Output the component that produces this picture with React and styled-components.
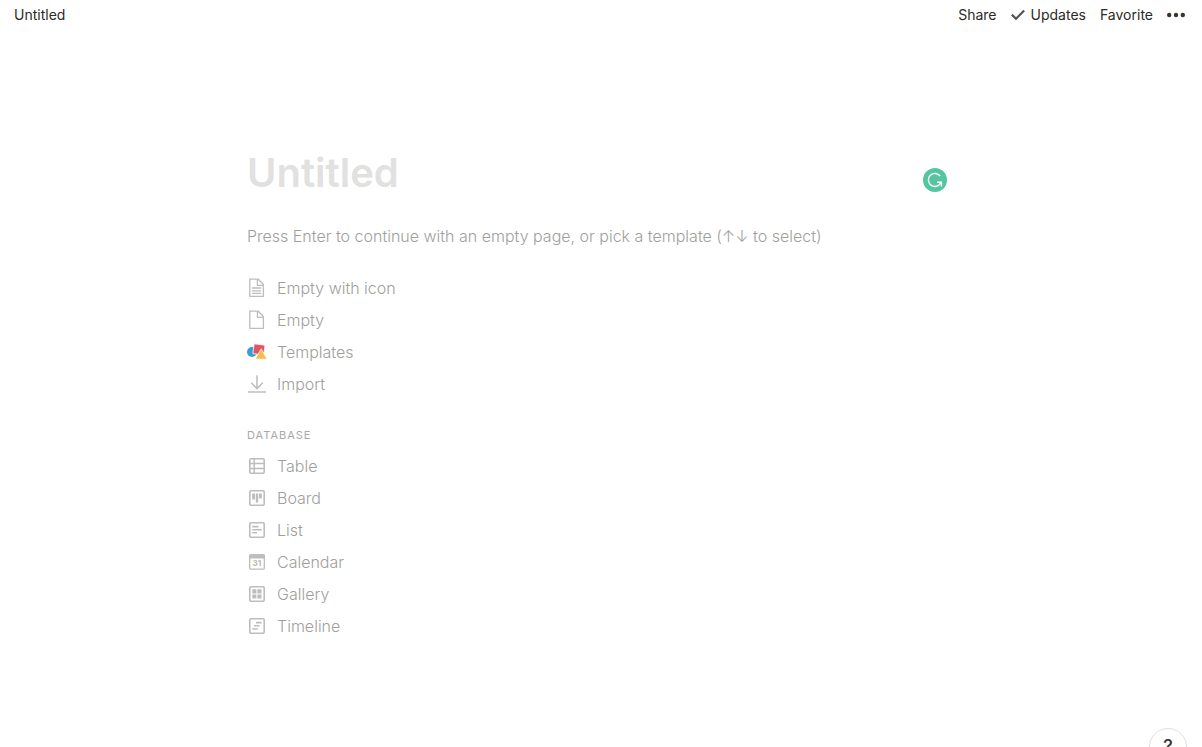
import React from "react";
import styled, { createGlobalStyle } from "styled-components";

const GlobalStyle = createGlobalStyle`
  *, *::before, *::after { box-sizing: border-box; }
  body {
    margin: 0;
    background: #fff;
    color: #37352f;
    font-family: Inter, "Liberation Sans", sans-serif;
  }
  button { font: inherit; color: inherit; background: none; border: 0; padding: 0; cursor: pointer; }
`;

const Page = styled.div`
  min-height: 100vh;
`;

const TopBar = styled.header`
  display: flex;
  align-items: center;
  justify-content: space-between;
  height: 30px;
  padding: 0 17px 0 14px;
  color: #2b2a26;
  font-size: 14px;
  line-height: 20px;
`;

const Crumb = styled.a`
  color: inherit;
  text-decoration: none;
`;

const Actions = styled.nav`
  display: flex;
  align-items: center;
  gap: 14px;
`;

const ActionButton = styled.button`
  display: flex;
  align-items: center;
  gap: 6px;
`;

const Content = styled.main`
  max-width: 900px;
  margin: 0 auto;
  padding: 117px 96px 64px;
`;

const TitleRow = styled.div`
  display: flex;
  align-items: center;
  padding-right: 8px;
`;

const TitleInput = styled.input`
  flex: 1;
  min-width: 0;
  height: 50px;
  padding: 0;
  border: 0;
  outline: 0;
  background: none;
  color: #37352f;
  font: 600 40px/48px Inter, "Liberation Sans", sans-serif;
  &::placeholder { color: #e1e1e0; opacity: 1; }
`;

const Badge = styled.button`
  display: flex;
  margin-top: 16px;
`;

const Prompt = styled.p`
  margin: 27px 0 24px;
  color: #a09f9c;
  font-size: 16px;
  font-weight: 300;
  line-height: 24px;
`;

const OptionList = styled.ul`
  margin: 0;
  padding: 0;
  list-style: none;
`;

const Option = styled.button`
  display: flex;
  align-items: center;
  gap: 10px;
  width: 100%;
  height: 32px;
  color: #a09f9c;
  font-size: 16px;
  font-weight: 300;
  line-height: 24px;
  text-align: left;
`;

const OptionIcon = styled.svg`
  flex: none;
  width: 20px;
  height: 20px;
  color: #bebdbb;
`;

const SectionLabel = styled.h2`
  margin: 28px 0 8px;
  color: #a9a8a6;
  font-size: 11px;
  font-weight: 400;
  line-height: 14px;
  letter-spacing: 1px;
  text-transform: uppercase;
`;

const HelpButton = styled.button`
  position: fixed;
  right: 15px;
  bottom: -19px;
  width: 38px;
  height: 38px;
  border: 1px solid #dededd;
  border-radius: 50%;
  background: #fff;
  font-size: 18px;
  font-weight: 500;
  line-height: 36px;
  text-align: center;
`;

const Frame = () => (
  <rect x="2.8" y="2.8" width="14.4" height="14.4" rx="1.2" fill="none" stroke="currentColor" strokeWidth="1.6" />
);

const icons = {
  lines: (
    <g fill="none" stroke="currentColor" strokeWidth="1.3">
      <path d="M2.8 1.2H11.2L16.4 6.6V18.4H2.8Z" />
      <path d="M10.4 1.2V7.4H16.4M5 10H14.2M5 12.8H14.2M5 15.4H14.2" />
    </g>
  ),
  empty: (
    <g fill="none" stroke="currentColor" strokeWidth="1.3">
      <path d="M2.8 1.2H11.2L16.4 6.6V18.4H2.8Z" />
      <path d="M10.4 1.2V7.4H16.4" />
    </g>
  ),
  templates: (
    <g>
      <circle cx="5" cy="10" r="5" fill="#3c9bd6" />
      <path d="M7.2 1.8L18 3.2L16.8 13L5.8 11.6Z" fill="#e4545f" stroke="#fff" strokeWidth="0.8" />
      <path d="M14.2 6.8L20.2 17.2H8.2Z" fill="#f5be4b" stroke="#fff" strokeWidth="0.8" />
    </g>
  ),
  import: (
    <g fill="none" stroke="currentColor" strokeWidth="1.5">
      <path d="M10 1.2V14.4M4.2 8.8L10 14.6L15.8 8.8" />
      <path d="M1 18H19" />
    </g>
  ),
  table: (
    <g>
      <Frame />
      <path d="M3 7.6H17M3 12.4H17M7.2 3V17" stroke="currentColor" strokeWidth="1.5" />
    </g>
  ),
  board: (
    <g>
      <Frame />
      <path d="M5.2 5.4H8V11.4H5.2ZM8.8 5.4H11.2V14.4H8.8ZM12 5.4H14.8V10.4H12Z" fill="currentColor" />
    </g>
  ),
  list: (
    <g>
      <Frame />
      <path d="M5.2 6.6H11.5M5.2 9.8H14.6M5.2 12.8H10" stroke="currentColor" strokeWidth="1.6" />
    </g>
  ),
  calendar: (
    <g>
      <rect x="2.7" y="2.9" width="14.6" height="14.3" rx="1" fill="none" stroke="currentColor" strokeWidth="1.3" />
      <path d="M2 3.5Q2 2.2 3.3 2.2H16.7Q18 2.2 18 3.5V6.6H2Z" fill="currentColor" />
      <text x="10" y="14.4" fontSize="8" fontWeight="800" textAnchor="middle" fill="currentColor">31</text>
    </g>
  ),
  gallery: (
    <g>
      <Frame />
      <path d="M5.3 5.3H9.4V9.4H5.3ZM10.4 5.3H14.5V9.4H10.4ZM5.3 10.4H9.4V14.5H5.3ZM10.4 10.4H14.5V14.5H10.4Z" fill="currentColor" />
    </g>
  ),
  timeline: (
    <g>
      <Frame />
      <path d="M9 6.6H14.6M7 9.8H12.6M5.3 13H10.8" stroke="currentColor" strokeWidth="1.6" />
    </g>
  ),
};

const starters = [
  ["lines", "Empty with icon"],
  ["empty", "Empty"],
  ["templates", "Templates"],
  ["import", "Import"],
];

const databases = [
  ["table", "Table"],
  ["board", "Board"],
  ["list", "List"],
  ["calendar", "Calendar"],
  ["gallery", "Gallery"],
  ["timeline", "Timeline"],
];

const Options = ({ items }) => (
  <OptionList>
    {items.map(([icon, label]) => (
      <li key={label}>
        <Option type="button">
          <OptionIcon viewBox="0 0 20 20" aria-hidden="true">{icons[icon]}</OptionIcon>
          {label}
        </Option>
      </li>
    ))}
  </OptionList>
);

export default function App() {
  return (
    <Page>
      <GlobalStyle />
      <TopBar>
        <Crumb href="#">Untitled</Crumb>
        <Actions aria-label="Page actions">
          <ActionButton type="button">Share</ActionButton>
          <ActionButton type="button">
            <svg width="14" height="14" viewBox="0 0 14 14" aria-hidden="true">
              <path d="M0.8 6.6L5 10.8L13.2 2.4" fill="none" stroke="#555450" strokeWidth="2.2" />
            </svg>
            Updates
          </ActionButton>
          <ActionButton type="button">Favorite</ActionButton>
          <ActionButton type="button" aria-label="More">
            <svg width="18" height="18" viewBox="0 0 18 18" fill="#37352f" aria-hidden="true">
              <circle cx="2.2" cy="9" r="2.2" />
              <circle cx="9" cy="9" r="2.2" />
              <circle cx="15.8" cy="9" r="2.2" />
            </svg>
          </ActionButton>
        </Actions>
      </TopBar>
      <Content>
        <TitleRow>
          <TitleInput type="text" placeholder="Untitled" aria-label="Page title" />
          <Badge type="button" aria-label="Check writing">
            <svg width="24" height="24" viewBox="0 0 24 24" aria-hidden="true">
              <circle cx="12" cy="12" r="12" fill="#54c59f" />
              <path d="M17.2 8.2A6.5 6.5 0 1 0 17.6 15" fill="none" stroke="#fff" strokeWidth="1.4" />
              <path d="M14 14.2H18.4V18.6" fill="none" stroke="#fff" strokeWidth="1.4" />
            </svg>
          </Badge>
        </TitleRow>
        <Prompt>Press Enter to continue with an empty page, or pick a template (↑↓ to select)</Prompt>
        <Options items={starters} />
        <SectionLabel>Database</SectionLabel>
        <Options items={databases} />
      </Content>
      <HelpButton type="button" aria-label="Help">?</HelpButton>
    </Page>
  );
}
